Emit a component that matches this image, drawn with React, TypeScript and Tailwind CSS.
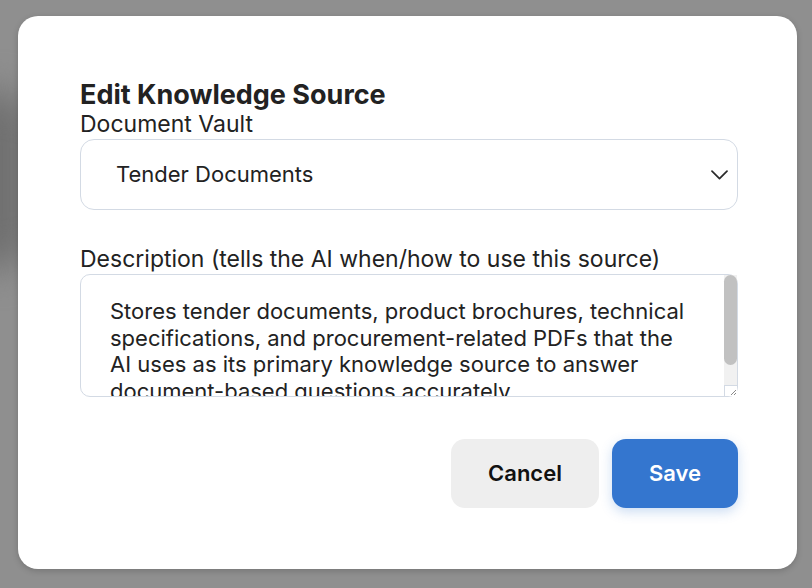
import React, { useState } from "react";

const DESCRIPTION =
  "Stores tender documents, product brochures, technical specifications, and procurement-related PDFs that the AI uses as its primary knowledge source to answer document-based questions accurately.";

export default function App() {
  const [vault] = useState("Tender Documents");
  const [description, setDescription] = useState(DESCRIPTION);

  return (
    <div
      className="relative h-[588px] w-full overflow-hidden bg-[#8f8f8f] pt-[16px] pl-[18px]"
      style={{ fontFamily: "Inter, 'Noto Sans', sans-serif" }}
    >
      {/* blurred page behind the overlay */}
      <div className="absolute left-[-40px] top-[90px] h-[180px] w-[70px] rounded-full bg-[#6f6f6f] blur-[18px]" />

      <div className="relative h-[553px] w-[779px] rounded-[20px] bg-white pl-[62px] pr-[59px] pt-[63px] shadow-[0_2px_6px_rgba(0,0,0,0.18)]">
        <h2 className="text-[27px] font-bold leading-[1.2] text-[#222222]">
          Edit Knowledge Source
        </h2>
        <label className="block text-[23px] leading-[1.21] text-[#222222]">
          Document Vault
        </label>
        <div className="flex h-[71px] items-center justify-between rounded-[14px] border border-[#d3dae4] pl-[35px] pr-[9px]">
          <span className="text-[22px] text-[#222222]">{vault}</span>
          <svg width="17" height="10" viewBox="0 0 17 10" fill="none" stroke="#2a2a2a" strokeWidth="1.7" strokeLinecap="round" strokeLinejoin="round">
            <polyline points="1,1.2 8.5,8.6 16,1.2" />
          </svg>
        </div>

        <label className="mt-[36px] block text-[23px] leading-[1.21] text-[#222222]">
          Description (tells the AI when/how to use this source)
        </label>
        <div className="relative">
          <textarea
            value={description}
            onChange={e => setDescription(e.target.value)}
            className="block h-[123px] w-full resize-none overflow-hidden rounded-[10px] border border-[#d3dae4] pl-[29px] pr-[43px] pt-[23px] text-[22px] leading-[26.6px] text-[#222222] outline-none"
          />
          {/* scrollbar */}
          <div className="pointer-events-none absolute right-[1px] top-[1px] bottom-[1px] flex w-[13px] flex-col bg-[#f1f1f1]">
            <div className="h-[90px] w-full rounded-full bg-[#c1c1c1]" />
            <div className="flex-1" />
            <div className="flex h-[11px] items-end justify-end border-l border-t border-[#d3dae4] bg-white">
              <svg width="8" height="8" viewBox="0 0 8 8" stroke="#8a8a8a" strokeWidth="1">
                <line x1="7" y1="2" x2="2" y2="7" />
                <line x1="7" y1="5" x2="5" y2="7" />
              </svg>
            </div>
          </div>
        </div>

        <div className="mt-[42px] flex justify-end gap-[13px]">
          <button className="h-[69px] w-[148px] rounded-[14px] bg-[#eeeeee] text-[22px] font-semibold text-[#111111]">
            Cancel
          </button>
          <button className="h-[69px] w-[126px] rounded-[14px] bg-[#3476cf] text-[22px] font-semibold text-white shadow-[0_4px_12px_rgba(52,118,207,0.25)]">
            Save
          </button>
        </div>
      </div>
    </div>
  );
}
